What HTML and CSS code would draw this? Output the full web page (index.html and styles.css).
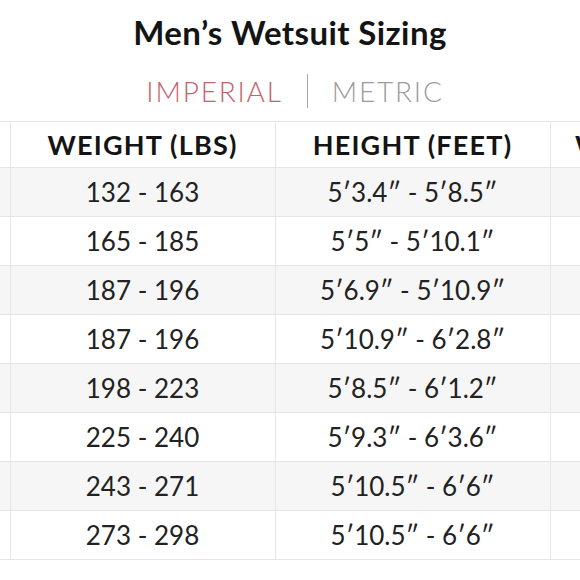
FILE: index.html
```html
<!DOCTYPE html>
<html lang="en">
<head>
<meta charset="utf-8">
<title>Men's Wetsuit Sizing</title>
<link rel="stylesheet" href="styles.css">
</head>
<body>
<div class="page">
  <h1 class="title">Men’s Wetsuit Sizing</h1>
  <div class="units">
    <span class="unit active">IMPERIAL</span>
    <span class="sep"></span>
    <span class="unit">METRIC</span>
  </div>
  <div class="table-wrap">
    <table class="size-table">
      <colgroup>
        <col class="c0"><col class="c1"><col class="c2"><col class="c3">
      </colgroup>
      <thead>
        <tr><th></th><th>WEIGHT (LBS)</th><th>HEIGHT (FEET)</th><th>WAIST (INCHES)</th></tr>
      </thead>
      <tbody>
        <tr><td></td><td>132 - 163</td><td>5′3.4″ - 5′8.5″</td><td></td></tr>
        <tr><td></td><td>165 - 185</td><td>5′5″ - 5′10.1″</td><td></td></tr>
        <tr><td></td><td>187 - 196</td><td>5′6.9″ - 5′10.9″</td><td></td></tr>
        <tr><td></td><td>187 - 196</td><td>5′10.9″ - 6′2.8″</td><td></td></tr>
        <tr><td></td><td>198 - 223</td><td>5′8.5″ - 6′1.2″</td><td></td></tr>
        <tr><td></td><td>225 - 240</td><td>5′9.3″ - 6′3.6″</td><td></td></tr>
        <tr><td></td><td>243 - 271</td><td>5′10.5″ - 6′6″</td><td></td></tr>
        <tr><td></td><td>273 - 298</td><td>5′10.5″ - 6′6″</td><td></td></tr>
      </tbody>
    </table>
  </div>
</div>
</body>
</html>
```
FILE: styles.css
```css
html, body {
  margin: 0;
  padding: 0;
  background: #ffffff;
}
.page {
  width: 580px;
  height: 580px;
  overflow: hidden;
  font-family: Lato, "Noto Sans", sans-serif;
  color: #141414;
}
.title {
  margin: 0;
  padding-top: 13px;
  height: 43px;
  line-height: 38px;
  font-size: 33px;
  font-weight: 700;
  text-align: center;
  letter-spacing: 0.4px;
}
.units {
  display: flex;
  justify-content: center;
  align-items: center;
  gap: 24px;
  height: 64px;
  padding-top: 6px;
  padding-left: 10px;
  box-sizing: border-box;
  font-size: 28px;
  font-weight: 300;
  letter-spacing: 1.8px;
}
.unit { color: #9c9c9c; }
.unit.active { color: #c4636d; }
.sep {
  width: 1px;
  height: 34px;
  background: #a8a8a8;
}
.table-wrap {
  margin-top: 1px;
  overflow: hidden;
  width: 580px;
}
.size-table {
  border-collapse: collapse;
  table-layout: fixed;
  width: 820px;
}
.c0 { width: 10px; }
.c1 { width: 265px; }
.c2 { width: 275px; }
.c3 { width: 270px; }
.size-table th,
.size-table td {
  border: 1px solid #e6e6e6;
  text-align: center;
  padding: 0;
  white-space: nowrap;
  overflow: hidden;
}
.size-table tr > :first-child { border-left: none; }
.size-table th {
  height: 45px;
  font-size: 27px;
  font-weight: 700;
  letter-spacing: 1.2px;
  color: #141414;
}
.size-table td {
  height: 48px;
  font-size: 26px;
  font-weight: 400;
  color: #222222;
}
.size-table tbody tr:nth-child(odd) td { background: #f6f6f6; }
```
